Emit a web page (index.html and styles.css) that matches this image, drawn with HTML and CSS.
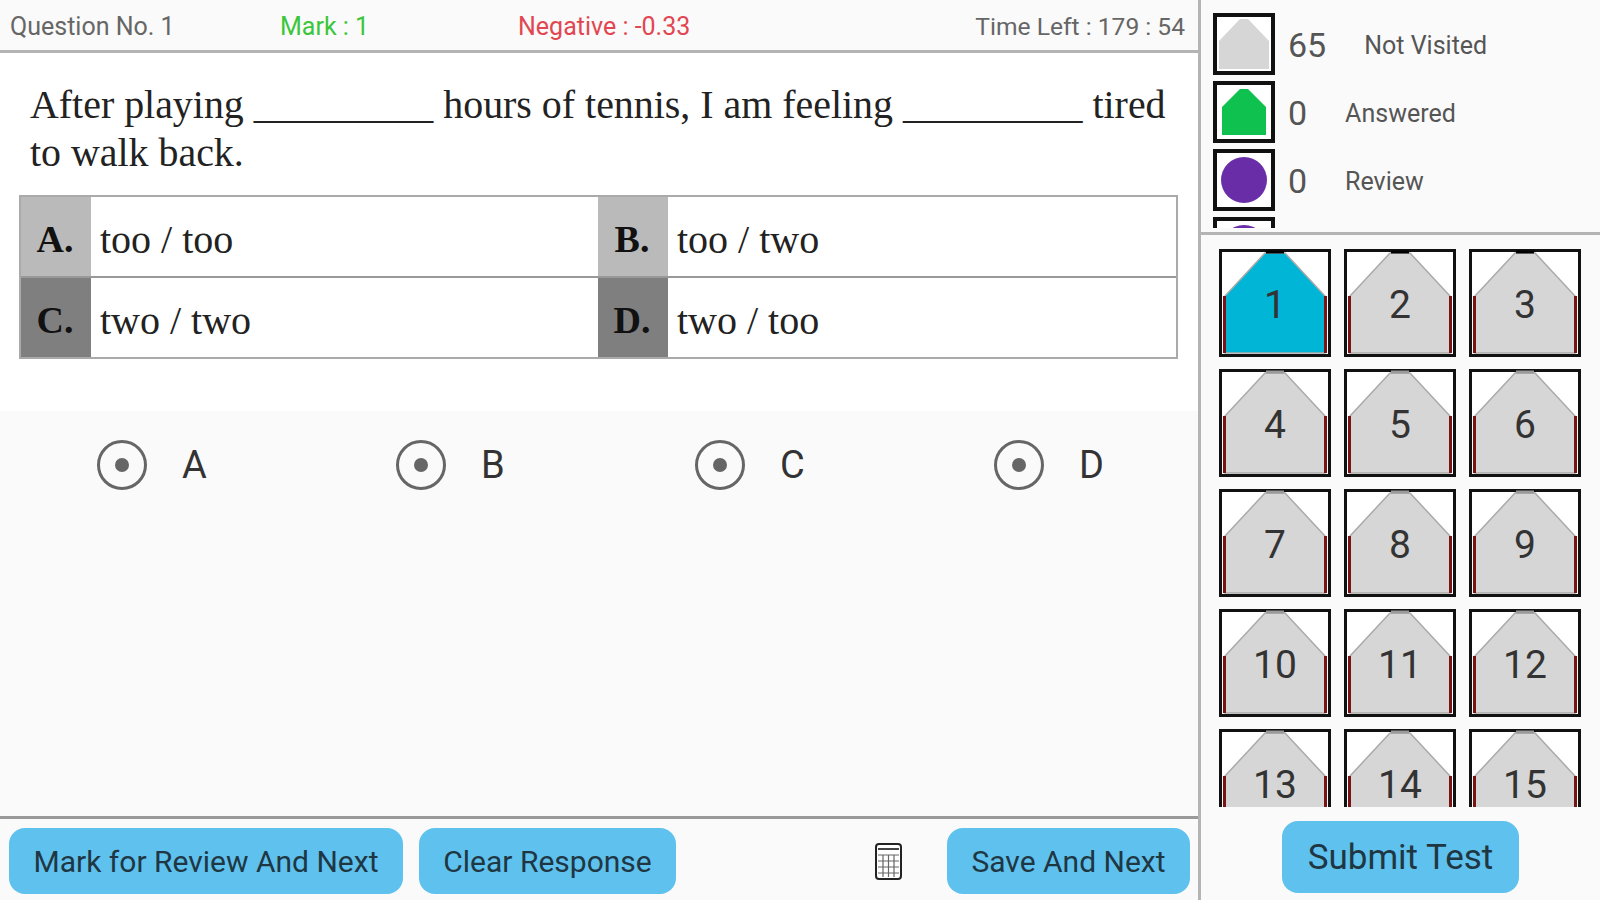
FILE: index.html
```html
<!DOCTYPE html>
<html lang="en">
<head>
  <meta charset="UTF-8">
  <title>Test</title>
  <link rel="stylesheet" href="styles.css">
</head>
<body>
  <!-- shapes shared by the legend and the question tiles -->
  <svg class="defs" aria-hidden="true">
    <symbol id="tile" viewBox="0 0 112 108">
      <rect class="tile-bg" x="1.5" y="1.5" width="109" height="105"/>
      <path class="tile-shape" d="M6 47 L46 4 L66 4 L106 47 L106 104 L6 104 Z"/>
      <path class="tile-edge" d="M5.5 47 V104 M106.5 47 V104"/>
      <path class="tile-apex" d="M47 3 H65"/>
    </symbol>
  </svg>

  <div class="app">
    <main class="question-pane">
      <header class="info-bar">
        <span class="info-no">Question No. 1</span>
        <span class="info-mark">Mark : 1</span>
        <span class="info-negative">Negative : -0.33</span>
        <span class="info-time">Time Left : 179 : 54</span>
      </header>

      <section class="question">
        <p class="question-text">After playing _________ hours of tennis, I am feeling _________ tired to walk back.</p>
        <div class="options">
          <b class="opt-label light">A.</b>
          <span class="opt-text">too / too</span>
          <b class="opt-label light">B.</b>
          <span class="opt-text">too / two</span>
          <b class="opt-label dark">C.</b>
          <span class="opt-text">two / two</span>
          <b class="opt-label dark">D.</b>
          <span class="opt-text">two / too</span>
        </div>
      </section>

      <section class="answers">
        <label class="answer"><i class="radio"></i>A</label>
        <label class="answer"><i class="radio"></i>B</label>
        <label class="answer"><i class="radio"></i>C</label>
        <label class="answer"><i class="radio"></i>D</label>
      </section>

      <footer class="actions">
        <button class="btn btn-review">Mark for Review And Next</button>
        <button class="btn btn-clear">Clear Response</button>
        <svg class="calc" viewBox="0 0 27 37">
          <rect x="1" y="1" width="25" height="35" rx="3" fill="#fff" stroke="#222" stroke-width="2"/>
          <path d="M3 6 H24" stroke="#444" stroke-width="2"/>
          <path d="M3 12 H24 M3 18 H24 M3 24 H24 M3 30 H24 M8 12 V34 M13.5 12 V34 M19 12 V34" stroke="#666" stroke-width="1.2" fill="none"/>
        </svg>
        <button class="btn btn-save">Save And Next</button>
      </footer>
    </main>

    <aside class="side-pane">
      <div class="legend">
        <div class="legend-list">
          <div class="legend-row">
            <span class="legend-icon"><svg viewBox="0 0 54 54"><path d="M2 24 L23 2 L31 2 L52 24 L52 52 L2 52 Z" fill="#d6d6d6"/></svg></span>
            <span class="legend-count">65</span>
            <span class="legend-label">Not Visited</span>
          </div>
          <div class="legend-row">
            <span class="legend-icon"><svg viewBox="0 0 54 54"><path d="M5 22 L23 4 L31 4 L49 22 L49 50 L5 50 Z" fill="#0fc24f"/></svg></span>
            <span class="legend-count">0</span>
            <span class="legend-label">Answered</span>
          </div>
          <div class="legend-row">
            <span class="legend-icon"><svg viewBox="0 0 54 54"><circle cx="27" cy="27" r="23" fill="#6a2da8"/></svg></span>
            <span class="legend-count">0</span>
            <span class="legend-label">Review</span>
          </div>
          <div class="legend-row">
            <span class="legend-icon"><svg viewBox="0 0 54 54"><circle cx="27" cy="27" r="23" fill="#6a2da8"/></svg></span>
          </div>
        </div>
      </div>

      <div class="tiles">
        <div class="tile current first"><svg><use href="#tile"/></svg><span>1</span></div>
        <div class="tile first"><svg><use href="#tile"/></svg><span>2</span></div>
        <div class="tile first"><svg><use href="#tile"/></svg><span>3</span></div>
        <div class="tile"><svg><use href="#tile"/></svg><span>4</span></div>
        <div class="tile"><svg><use href="#tile"/></svg><span>5</span></div>
        <div class="tile"><svg><use href="#tile"/></svg><span>6</span></div>
        <div class="tile"><svg><use href="#tile"/></svg><span>7</span></div>
        <div class="tile"><svg><use href="#tile"/></svg><span>8</span></div>
        <div class="tile"><svg><use href="#tile"/></svg><span>9</span></div>
        <div class="tile"><svg><use href="#tile"/></svg><span>10</span></div>
        <div class="tile"><svg><use href="#tile"/></svg><span>11</span></div>
        <div class="tile"><svg><use href="#tile"/></svg><span>12</span></div>
        <div class="tile"><svg><use href="#tile"/></svg><span>13</span></div>
        <div class="tile"><svg><use href="#tile"/></svg><span>14</span></div>
        <div class="tile"><svg><use href="#tile"/></svg><span>15</span></div>
      </div>

      <div class="submit-row">
        <button class="btn btn-submit">Submit Test</button>
      </div>
    </aside>
  </div>
</body>
</html>
```

FILE: styles.css
```css
:root {
  --page-bg: #fafafa;
  --line: #b4b4b4;
  --btn: #5fc1ee;
  --btn-text: #1f3743;
}

* {
  box-sizing: border-box;
  margin: 0;
  padding: 0;
}

html,
body {
  height: 100%;
  overflow: hidden;
}

body {
  background: var(--page-bg);
  font-family: Roboto, 'Liberation Sans', sans-serif;
  color: #333;
}

.defs {
  display: none;
}

.app {
  display: flex;
  height: 900px;
}

/* left side */
.question-pane {
  width: 1201px;
  display: flex;
  flex-direction: column;
  border-right: 3px solid var(--line);
}

.info-bar {
  height: 53px;
  flex: none;
  display: grid;
  grid-template-columns: 270px 238px 1fr auto;
  align-items: center;
  padding: 2px 13px 0 10px;
  border-bottom: 3px solid var(--line);
  font-size: 25px;
  color: #666;
}

.info-mark {
  color: #3cc63c;
}

.info-negative {
  color: #e24650;
}

.info-time {
  font-size: 24.6px;
}

.question {
  height: 358px;
  flex: none;
  background: #fff;
  padding: 28px 20px 0;
}

.question-text {
  padding: 0 8px 0 10px;
  font-family: 'Liberation Serif', serif;
  font-size: 39.9px;
  line-height: 48px;
  color: #222;
}

.options {
  display: grid;
  grid-template-columns: 70px 507px 70px 1fr;
  grid-template-rows: 81px 79px;
  width: 1159px;
  margin-top: 18px;
  margin-left: -1px;
  border: 2px solid #aaa;
  font-family: 'Liberation Serif', serif;
  font-size: 40px;
  color: #222;
}

.opt-label {
  display: flex;
  align-items: center;
  justify-content: center;
  padding: 5px 2px 0 0;
  font-size: 38px;
  color: #111;
}

.opt-label.light {
  background: #bababa;
}

.opt-label.dark {
  background: #7f7f7f;
}

.opt-text {
  display: flex;
  align-items: center;
  padding: 6px 0 0 9px;
  background: #fff;
}

.opt-text:nth-child(-n+4),
.opt-label:nth-child(-n+4) {
  border-bottom: 2px solid #999;
}

.answers {
  flex: 1;
  display: grid;
  grid-template-columns: repeat(4, 299px);
  align-content: start;
  padding-top: 29px;
}

.answer {
  display: flex;
  align-items: center;
  gap: 35px;
  padding-left: 97px;
  font-size: 38px;
  color: #333;
}

.radio {
  width: 50px;
  height: 50px;
  border: 3px solid #666;
  border-radius: 50%;
  display: flex;
  align-items: center;
  justify-content: center;
}

.radio::after {
  content: '';
  width: 14px;
  height: 14px;
  border-radius: 50%;
  background: #666;
}

.actions {
  height: 84px;
  flex: none;
  display: flex;
  align-items: center;
  padding: 3px 8px 0 9px;
  border-top: 3px solid #999;
}

.btn {
  border: none;
  border-radius: 16px;
  background: var(--btn);
  color: var(--btn-text);
  font-family: Roboto, 'Liberation Sans', sans-serif;
  font-size: 30px;
  height: 66px;
}

.btn-review {
  width: 394px;
}

.btn-clear {
  width: 257px;
  margin-left: 16px;
}

.calc {
  width: 29px;
  height: 37px;
  margin-left: auto;
}

.btn-save {
  width: 243px;
  margin-left: 44px;
}

/* right side */
.side-pane {
  flex: 1;
  display: flex;
  flex-direction: column;
}

.legend {
  height: 235px;
  flex: none;
  padding: 13px 0 0 12px;
  border-bottom: 3px solid var(--line);
}

.legend-list {
  height: 215px;
  overflow: hidden;
}

.legend-row {
  display: flex;
  align-items: center;
  height: 62px;
  margin-bottom: 6px;
  color: #555;
}

.legend-icon {
  width: 62px;
  height: 62px;
  flex: none;
  border: 4px solid #111;
  background: #fff;
}

.legend-icon svg {
  display: block;
  width: 54px;
  height: 54px;
}

.legend-count {
  margin-left: 13px;
  padding-top: 2px;
  font-size: 34px;
}

.legend-label {
  margin-left: 38px;
  padding-top: 2px;
  font-size: 25px;
}

.tiles {
  --tile-fill: #d6d6d6;
  --tile-apex: #999;
  height: 572px;
  flex: none;
  overflow: hidden;
  display: grid;
  grid-template-columns: repeat(3, 112px);
  grid-auto-rows: 108px;
  gap: 12px 13px;
  padding: 14px 0 0 18px;
}

.tile {
  display: grid;
  place-items: center;
}

.tile svg,
.tile span {
  grid-area: 1 / 1;
}

.tile svg {
  width: 112px;
  height: 108px;
}

.tile span {
  padding-top: 4px;
  font-size: 39px;
  color: #333;
}

.tile.first {
  --tile-apex: #000;
}

.tile.current {
  --tile-fill: #00b5d6;
}

.tile-bg {
  fill: #fff;
  stroke: #111;
  stroke-width: 3;
}

.tile-shape {
  fill: var(--tile-fill);
  stroke: #aaa;
  stroke-width: 1.5;
}

.tile.current .tile-shape {
  stroke: none;
}

.tile-edge {
  fill: none;
  stroke: #7a1414;
  stroke-width: 3;
}

.tile-apex {
  fill: none;
  stroke: var(--tile-apex);
  stroke-width: 3;
}

.submit-row {
  flex: 1;
  display: flex;
  justify-content: center;
  padding-top: 14px;
}

.btn-submit {
  width: 237px;
  height: 72px;
  font-size: 35px;
}
```
